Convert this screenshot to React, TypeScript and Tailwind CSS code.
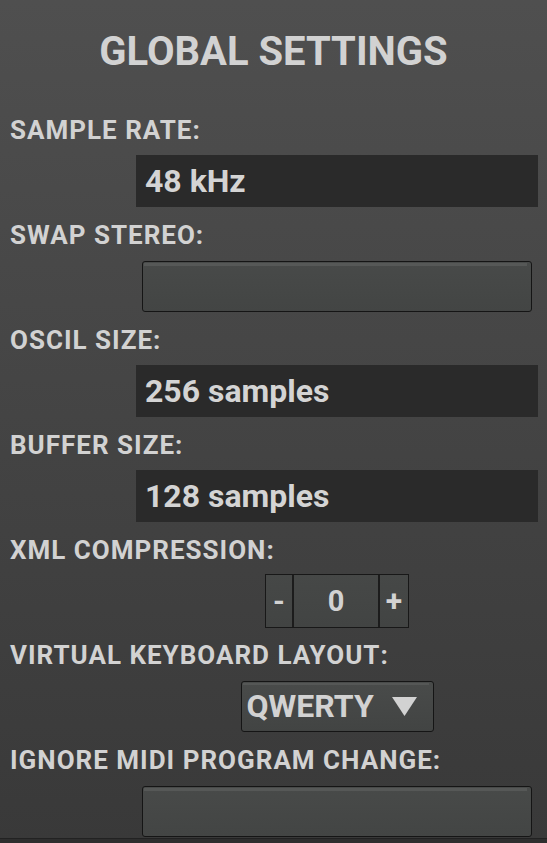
import React from "react";

const font = { fontFamily: "Roboto, 'Liberation Sans', sans-serif" };

function Label({ children }: { children: React.ReactNode }) {
  return (
    <div className="h-[30px] pl-[10px] text-[26px] leading-[30px] font-bold tracking-[1px] text-[#d2d2d2] whitespace-nowrap">
      {children}
    </div>
  );
}

function ValueBox({ children }: { children: React.ReactNode }) {
  return (
    <div className="w-full h-[52px] bg-[#2a2a2a] flex items-center pl-[9px] text-[32px] font-bold text-[#d4d4d4] leading-none">
      {children}
    </div>
  );
}

function Toggle() {
  return (
    <div className="w-[390px] h-[51px] rounded-[3px] border border-[#151515] bg-gradient-to-b from-[#484a49] to-[#434544] relative overflow-hidden">
      <div className="absolute left-[1px] right-[4px] top-[1px] h-[3px] bg-[#565857]" />
    </div>
  );
}

function Section({ label, children }: { label: string; children: React.ReactNode }) {
  return (
    <div className="flex flex-col">
      <Label>{label}</Label>
      <div className="mt-[10px] h-[52px] pl-[136px] pr-[9px] flex items-center justify-center">
        {children}
      </div>
    </div>
  );
}

export default function App() {
  return (
    <div
      className="w-[547px] h-[843px] overflow-hidden bg-gradient-to-b from-[#4f4f4f] to-[#393939] relative"
      style={font}
    >
      <div className="pt-[28px] h-[76px] text-center text-[40px] leading-[48px] font-bold text-[#d2d2d2]">
        GLOBAL SETTINGS
      </div>
      <div className="mt-[39px] flex flex-col gap-[13px]">
        <Section label="SAMPLE RATE:">
          <ValueBox>48 kHz</ValueBox>
        </Section>
        <Section label="SWAP STEREO:">
          <Toggle />
        </Section>
        <Section label="OSCIL SIZE:">
          <ValueBox>256 samples</ValueBox>
        </Section>
        <Section label="BUFFER SIZE:">
          <ValueBox>128 samples</ValueBox>
        </Section>
        <Section label="XML COMPRESSION:">
          <div className="flex h-[54px] border border-[#181818] bg-gradient-to-b from-[#464847] to-[#424443] text-[#d2d2d2] font-bold">
            <div className="w-[28px] flex items-center justify-center text-[30px] leading-none border-r-2 border-[#1c1c1c]">-</div>
            <div className="w-[86px] flex items-center justify-center text-[29px] leading-none border-r-2 border-[#1c1c1c]">0</div>
            <div className="w-[28px] flex items-center justify-center text-[30px] leading-none">+</div>
          </div>
        </Section>
        <Section label="VIRTUAL KEYBOARD LAYOUT:">
          <div className="w-[193px] h-[51px] rounded-[3px] border border-[#151515] bg-gradient-to-b from-[#494b4a] to-[#424443] relative flex items-center pl-[5px] text-[32px] font-bold leading-none text-[#d2d2d2]">
            <div className="absolute left-[1px] right-[4px] top-[1px] h-[2px] bg-[#555756]" />
            <span>QWERTY</span>
            <svg className="ml-[18px]" width="25" height="19" viewBox="0 0 25 19">
              <polygon points="0,0 25,0 12.5,19" fill="#d2d2d2" />
            </svg>
          </div>
        </Section>
        <Section label="IGNORE MIDI PROGRAM CHANGE:">
          <Toggle />
        </Section>
      </div>
      <div className="absolute left-0 right-0 bottom-0 h-[5px] bg-[#2e2e2e] border-t border-[#222]" />
    </div>
  );
}
